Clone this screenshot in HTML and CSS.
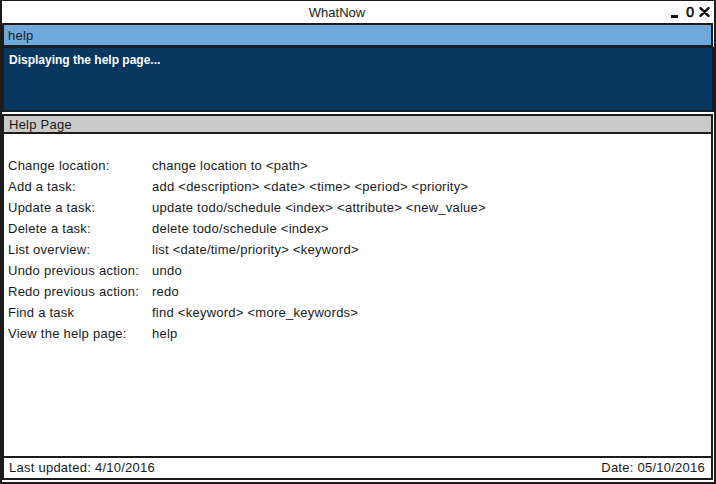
FILE: index.html
```html
<!DOCTYPE html>
<html>
<head>
<meta charset="utf-8">
<title>WhatNow</title>
<link rel="stylesheet" href="styles.css">
</head>
<body>
<div class="window">
  <div class="titlebar">
    <span class="title">WhatNow</span>
    <div class="controls">
      <span class="ctl-min"></span>
      <span class="ctl-max">0</span>
      <svg class="ctl-close" width="11" height="10" viewBox="0 0 11 10"><path d="M1.5 1.2 L9.5 8.8 M9.5 1.2 L1.5 8.8" stroke="#111" stroke-width="2.4" stroke-linecap="round"/></svg>
    </div>
  </div>
  <div class="command">help</div>
  <div class="feedback">Displaying the help page...</div>
  <div class="section-head">Help Page</div>
  <div class="content">
    <div class="help-grid">
      <span>Change location:</span><span>change location to &lt;path&gt;</span>
      <span>Add a task:</span><span>add &lt;description&gt; &lt;date&gt; &lt;time&gt; &lt;period&gt; &lt;priority&gt;</span>
      <span>Update a task:</span><span>update todo/schedule &lt;index&gt; &lt;attribute&gt; &lt;new_value&gt;</span>
      <span>Delete a task:</span><span>delete todo/schedule &lt;index&gt;</span>
      <span>List overview:</span><span>list &lt;date/time/priority&gt; &lt;keyword&gt;</span>
      <span>Undo previous action:</span><span>undo</span>
      <span>Redo previous action:</span><span>redo</span>
      <span>Find a task</span><span>find &lt;keyword&gt; &lt;more_keywords&gt;</span>
      <span>View the help page:</span><span>help</span>
    </div>
  </div>
  <div class="footer">
    <span>Last updated: 4/10/2016</span>
    <span>Date: 05/10/2016</span>
  </div>
</div>
</body>
</html>
```
FILE: styles.css
```css
* { box-sizing: border-box; }
html, body { margin: 0; padding: 0; background: #fff; }
body {
  width: 716px;
  height: 484px;
  font-family: "Liberation Sans", Arial, sans-serif;
  font-size: 13px;
  letter-spacing: 0.25px;
  color: #1a1a1a;
}
.window {
  width: 716px;
  height: 484px;
  border: 2px solid #1c1c1c;
  border-top-width: 1px;
  display: flex;
  flex-direction: column;
  background: #fff;
}
.titlebar {
  height: 22px;
  flex: none;
  display: flex;
  align-items: center;
  justify-content: center;
  position: relative;
}
.title { font-size: 13px; letter-spacing: 0; margin-right: 42px; }
.controls {
  position: absolute;
  right: 4px;
  top: 5px;
  height: 12px;
  display: flex;
  align-items: flex-end;
}
.ctl-min { width: 7px; height: 3px; background: #111; margin-right: 8px; margin-left: -3px; }
.ctl-max {
  font-size: 14px;
  line-height: 12px;
  letter-spacing: 0;
  margin-right: 5px;
  color: #111;
  -webkit-text-stroke: 0.6px #111;
}
.ctl-close { display: block; margin-bottom: 1px; }
.command {
  height: 24px;
  flex: none;
  background: #6fa8dc;
  border: 2px solid #1c1c1c;
  padding: 3px 4px;
  margin-right: 1px;
}
.feedback {
  height: 65px;
  flex: none;
  background: #07365f;
  border: 2px solid #1c1c1c;
  border-top-width: 1px;
  color: #fff;
  font-weight: bold;
  font-size: 12px;
  letter-spacing: 0;
  padding: 5px 5px;
}
.section-head {
  height: 19px;
  flex: none;
  margin-top: 2px;
  margin-right: 1px;
  background: #cacaca;
  border: 2px solid #1c1c1c;
  border-bottom-width: 1px;
  padding: 1px 5px;
}
.content {
  flex: 1;
  border: 2px solid #1c1c1c;
  border-top-width: 1px;
  border-bottom: none;
  padding: 24px 4px 0;
  margin-right: 1px;
}
.help-grid {
  display: grid;
  grid-template-columns: 144px auto;
  row-gap: 6px;
  line-height: 15px;
}
.footer {
  height: 24px;
  flex: none;
  border: 2px solid #1c1c1c;
  margin-right: 1px;
  margin-bottom: 2px;
  display: flex;
  justify-content: space-between;
  align-items: center;
  padding: 0 6px 1px 5px;
}
```
